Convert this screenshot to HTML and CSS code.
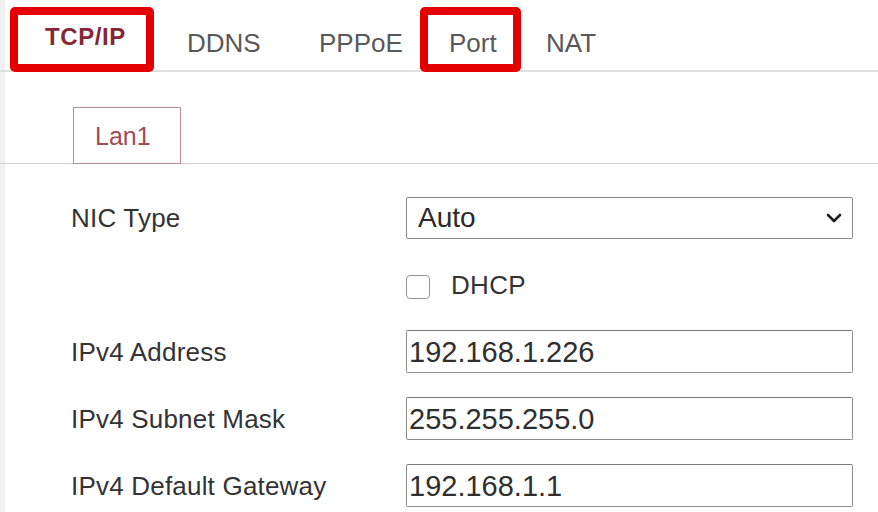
FILE: index.html
```html
<!DOCTYPE html>
<html lang="en">
<head>
<meta charset="utf-8">
<title>TCP/IP</title>
<link rel="stylesheet" href="styles.css">
</head>
<body>
<div class="page">
  <nav class="tabs">
    <div class="tab tab-boxed tab-first"><span class="tab-active-text">TCP/IP</span></div>
    <div class="tab tab-plain tab-ddns">DDNS</div>
    <div class="tab tab-plain tab-pppoe">PPPoE</div>
    <div class="tab tab-boxed tab-port"><span class="tab-port-text">Port</span></div>
    <div class="tab tab-plain tab-nat">NAT</div>
  </nav>

  <div class="subtabs">
    <div class="subtab">Lan1</div>
  </div>

  <form class="form">
    <div class="row">
      <label class="label">NIC Type</label>
      <div class="select">
        <span class="select-value">Auto</span>
        <svg class="chevron" width="16" height="10" viewBox="0 0 16 10"><path d="M2 2 L8 8 L14 2" fill="none" stroke="#1e1e1e" stroke-width="2.6" stroke-linecap="round" stroke-linejoin="round"/></svg>
      </div>
    </div>
    <div class="row">
      <span class="label"></span>
      <div class="check-wrap">
        <span class="checkbox"></span>
        <span class="check-label">DHCP</span>
      </div>
    </div>
    <div class="row">
      <label class="label">IPv4 Address</label>
      <div class="input">192.168.1.226</div>
    </div>
    <div class="row">
      <label class="label">IPv4 Subnet Mask</label>
      <div class="input">255.255.255.0</div>
    </div>
    <div class="row">
      <label class="label">IPv4 Default Gateway</label>
      <div class="input">192.168.1.1</div>
    </div>
  </form>
</div>
</body>
</html>
```
FILE: styles.css
```css
* { box-sizing: border-box; }

html, body {
  margin: 0;
  padding: 0;
}

body {
  width: 878px;
  height: 512px;
  overflow: hidden;
  background: linear-gradient(to right, #f1f1f1 0, #f1f1f1 5px, #ffffff 5px);
  font-family: "Liberation Sans", Arial, sans-serif;
  color: #333;
}

.page {
  width: 878px;
}

/* top tabs */
.tabs {
  display: flex;
  align-items: flex-start;
  height: 72px;
  padding-top: 7px;
  border-bottom: 2px solid #e0e0e0;
}

.tab {
  flex: none;
  white-space: nowrap;
}

.tab-boxed {
  height: 65px;
  border: 8px solid #e50000;
  border-radius: 5px;
  background: #fff;
}

.tab-first {
  width: 144px;
  margin-left: 10px;
  padding: 8px 0 0 27px;
}

.tab-active-text {
  display: block;
  font-size: 24px;
  line-height: 27px;
  font-weight: bold;
  letter-spacing: 0.6px;
  color: #862634;
}

.tab-plain {
  margin-top: 21px;
  font-size: 26px;
  line-height: 30px;
  color: #595959;
}

.tab-ddns {
  width: 132px;
  margin-left: 33px;
}

.tab-pppoe {
  width: 101px;
}

.tab-port {
  width: 101px;
  padding: 13px 0 0 21px;
}

.tab-port-text {
  display: block;
  font-size: 26px;
  line-height: 30px;
  color: #595959;
}

.tab-nat {
  margin-left: 25px;
}

/* sub tabs */
.subtabs {
  display: flex;
  margin-top: 35px;
  padding-left: 73px;
  border-bottom: 1px solid #cfcfcf;
}

.subtab {
  width: 108px;
  height: 57px;
  margin-bottom: -1px;
  border: 1px solid #b88d95;
  background: #fff;
  padding: 14px 0 0 21px;
  font-size: 25px;
  line-height: 28px;
  color: #a24b57;
}

/* form */
.form {
  margin-top: 20px;
  display: flex;
  flex-direction: column;
}

.row {
  display: flex;
  align-items: center;
  height: 67px;
  padding-left: 71px;
}

.label {
  width: 335px;
  flex: none;
  font-size: 26px;
  line-height: 30px;
  letter-spacing: 0.2px;
  color: #333;
}

.select {
  width: 447px;
  height: 42px;
  display: flex;
  align-items: center;
  justify-content: space-between;
  border: 1px solid #8a8a8a;
  border-radius: 2px;
  padding: 0 10px 0 11px;
  background: #fff;
}

.select-value {
  font-size: 28px;
  line-height: 32px;
  color: #2a2a2a;
}

.chevron {
  display: block;
  margin-top: 1px;
}

.check-wrap {
  display: flex;
  align-items: center;
  margin-top: 5px;
}

.checkbox {
  width: 24px;
  height: 24px;
  border: 1.5px solid #959595;
  border-radius: 4px;
  background: #fff;
}

.check-label {
  margin-left: 21px;
  font-size: 26px;
  line-height: 30px;
  letter-spacing: 0.3px;
  color: #333;
  margin-top: -4px;
}

.input {
  width: 447px;
  height: 43px;
  display: flex;
  align-items: center;
  border: 1px solid #8f8f8f;
  border-top-color: #7a7a7a;
  border-radius: 2px;
  padding-left: 2px;
  font-size: 29px;
  line-height: 32px;
  color: #2f2f2f;
  background: #fff;
}
```
